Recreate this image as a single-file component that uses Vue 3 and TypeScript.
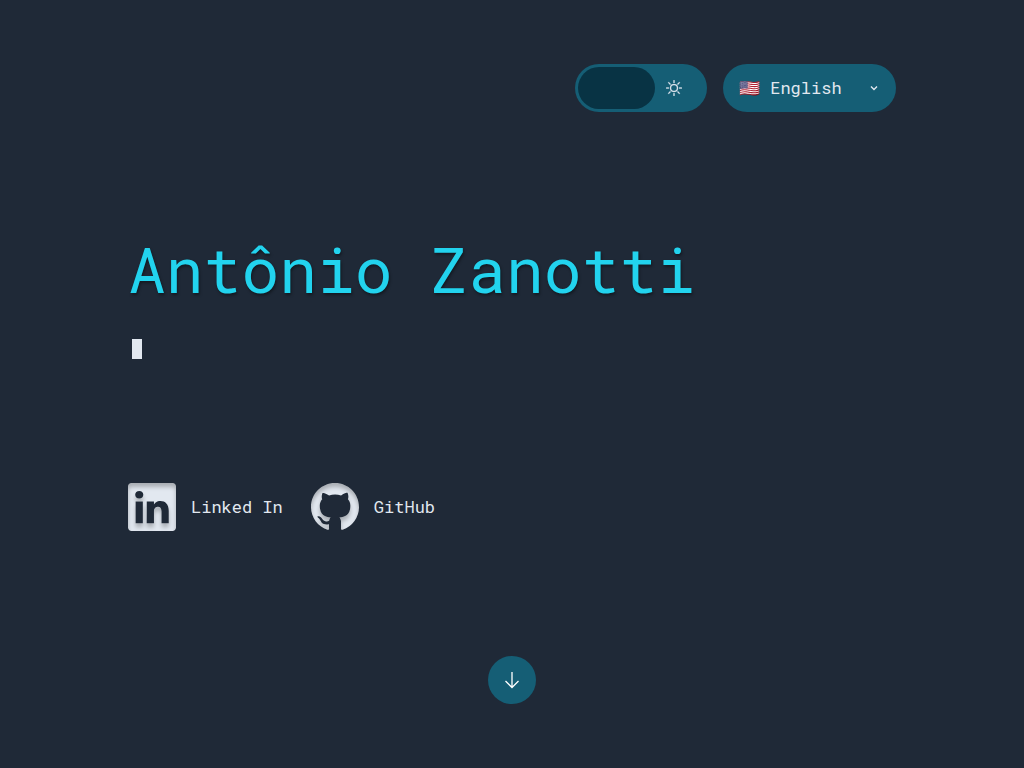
<script setup lang="ts">
import { ref } from 'vue'

interface SocialLink {
  label: string
  href: string
  path: string
}

const light = ref(false)
const language = ref('en')

const links: SocialLink[] = [
  {
    label: 'Linked In',
    href: '#linkedin',
    path: 'M0 1.146C0 .513.526 0 1.175 0h13.65C15.474 0 16 .513 16 1.146v13.708c0 .633-.526 1.146-1.175 1.146H1.175C.526 16 0 15.487 0 14.854V1.146zm4.943 12.248V6.169H2.542v7.225h2.401zm-1.2-8.212c.837 0 1.358-.554 1.358-1.248-.015-.709-.52-1.248-1.342-1.248-.822 0-1.359.54-1.359 1.248 0 .694.521 1.248 1.327 1.248h.016zm4.908 8.212V9.359c0-.216.016-.432.08-.586.173-.431.568-.878 1.232-.878.869 0 1.216.662 1.216 1.634v3.865h2.401V9.25c0-2.22-1.184-3.252-2.764-3.252-1.274 0-1.845.7-2.165 1.193v.025h-.016a5.54 5.54 0 0 1 .016-.025V6.169h-2.4c.03.678 0 7.225 0 7.225h2.4z',
  },
  {
    label: 'GitHub',
    href: '#github',
    path: 'M8 0C3.58 0 0 3.58 0 8c0 3.54 2.29 6.53 5.47 7.59.4.07.55-.17.55-.38 0-.19-.01-.82-.01-1.49-2.01.37-2.53-.49-2.69-.94-.09-.23-.48-.94-.82-1.13-.28-.15-.68-.52-.01-.53.63-.01 1.08.58 1.23.82.72 1.21 1.87.87 2.33.66.07-.52.28-.87.51-1.07-1.78-.2-3.64-.89-3.64-3.95 0-.87.31-1.59.82-2.15-.08-.2-.36-1.02.08-2.12 0 0 .67-.21 2.2.82.64-.18 1.32-.27 2-.27.68 0 1.36.09 2 .27 1.53-1.04 2.2-.82 2.2-.82.44 1.1.16 1.92.08 2.12.51.56.82 1.27.82 2.15 0 3.07-1.87 3.75-3.65 3.95.29.25.54.73.54 1.48 0 1.07-.01 1.93-.01 2.2 0 .21.15.46.55.38A8.012 8.012 0 0 0 16 8c0-4.42-3.58-8-8-8z',
  },
]
</script>

<template>
  <div class="page">
    <header class="toolbar">
      <button
        class="theme"
        :class="{ 'theme--light': light }"
        type="button"
        aria-label="Toggle theme"
        :aria-pressed="light"
        @click="light = !light"
      >
        <span class="theme__thumb"></span>
        <svg class="theme__sun" viewBox="0 0 16 16" aria-hidden="true">
          <path d="M8 11a3 3 0 1 1 0-6 3 3 0 0 1 0 6zm0 1a4 4 0 1 0 0-8 4 4 0 0 0 0 8zM8 0a.5.5 0 0 1 .5.5v2a.5.5 0 0 1-1 0v-2A.5.5 0 0 1 8 0zm0 13a.5.5 0 0 1 .5.5v2a.5.5 0 0 1-1 0v-2A.5.5 0 0 1 8 13zm8-5a.5.5 0 0 1-.5.5h-2a.5.5 0 0 1 0-1h2a.5.5 0 0 1 .5.5zM3 8a.5.5 0 0 1-.5.5h-2a.5.5 0 0 1 0-1h2A.5.5 0 0 1 3 8zm10.657-5.657a.5.5 0 0 1 0 .707l-1.414 1.415a.5.5 0 1 1-.707-.708l1.414-1.414a.5.5 0 0 1 .707 0zm-9.193 9.193a.5.5 0 0 1 0 .707L3.05 13.657a.5.5 0 0 1-.707-.707l1.414-1.414a.5.5 0 0 1 .707 0zm9.193 2.121a.5.5 0 0 1-.707 0l-1.414-1.414a.5.5 0 0 1 .707-.707l1.414 1.414a.5.5 0 0 1 0 .707zM4.464 4.465a.5.5 0 0 1-.707 0L2.343 3.05a.5.5 0 1 1 .707-.707l1.414 1.414a.5.5 0 0 1 0 .708z" />
        </svg>
      </button>
      <div class="language">
        <select v-model="language" class="language__select" aria-label="Language">
          <option value="en">🇺🇸 English</option>
          <option value="pt">🇧🇷 Português</option>
        </select>
        <svg class="language__chevron" viewBox="0 0 8 6" aria-hidden="true">
          <path d="M1 1.4L4 4.4l3-3" />
        </svg>
      </div>
    </header>

    <main class="hero">
      <h1 class="hero__name">Antônio Zanotti</h1>
      <p class="hero__typed"><span class="hero__cursor"></span></p>
    </main>

    <nav class="social" aria-label="Social profiles">
      <a v-for="link in links" :key="link.label" class="social__link" :href="link.href">
        <svg class="social__icon" viewBox="0 0 16 16" aria-hidden="true">
          <path :d="link.path" />
        </svg>
        {{ link.label }}
      </a>
    </nav>

    <footer class="more">
      <a class="more__button" href="#about" aria-label="Scroll down">
        <svg class="more__arrow" viewBox="0 0 16 18" aria-hidden="true">
          <path d="M8 1v15.5M1.5 10L8 16.5l6.5-6.5" />
        </svg>
      </a>
    </footer>

    <svg class="filters" aria-hidden="true">
      <filter id="inner-shadow" x="-0.3" y="-0.3" width="1.6" height="1.6" color-interpolation-filters="sRGB">
        <feOffset in="SourceAlpha" dy="4" result="moved" />
        <feGaussianBlur in="moved" stdDeviation="2" result="soft" />
        <feComposite in="SourceAlpha" in2="soft" operator="out" result="edge" />
        <feFlood flood-color="#000" flood-opacity="0.25" />
        <feComposite in2="edge" operator="in" result="shade" />
        <feMerge>
          <feMergeNode in="SourceGraphic" />
          <feMergeNode in="shade" />
        </feMerge>
      </filter>
    </svg>
  </div>
</template>

<style>
body {
  margin: 0;
  background: #1f2937;
}
</style>

<style scoped>
.page {
  box-sizing: border-box;
  min-height: 100vh;
  padding: 64px 12.5%;
  display: flex;
  flex-direction: column;
  justify-content: space-between;
  background: #1f2937;
  color: #e2e8f0;
  font-family: "Roboto Mono", "DejaVu Sans Mono", monospace;
  font-size: 17px;
  line-height: 24px;
}

.toolbar {
  display: flex;
  justify-content: flex-end;
  gap: 16px;
}

.theme {
  width: 132px;
  height: 48px;
  padding: 3px;
  border: 0;
  border-radius: 24px;
  background: #155e75;
  display: flex;
  align-items: center;
  gap: 11px;
  cursor: pointer;
}

.theme--light {
  flex-direction: row-reverse;
}

.theme__thumb {
  width: 77px;
  height: 42px;
  border-radius: 21px;
  background: #083344;
}

.theme__sun {
  width: 16px;
  height: 16px;
  fill: #e2e8f0;
  stroke: #e2e8f0;
  stroke-width: 0.3;
}

.language {
  position: relative;
}

.language__select {
  appearance: none;
  box-sizing: border-box;
  width: 173px;
  height: 48px;
  padding: 0 16px;
  border: 0;
  border-radius: 24px;
  background: #155e75;
  color: #e2e8f0;
  font: inherit;
  cursor: pointer;
}

.language__chevron {
  position: absolute;
  top: 21px;
  right: 18px;
  width: 8px;
  height: 6px;
  fill: none;
  stroke: #e2e8f0;
  stroke-width: 1.4;
  pointer-events: none;
}

.hero__name {
  margin: 0;
  color: #22d3ee;
  font-size: 63px;
  font-weight: 400;
  line-height: 64px;
  text-shadow: 1px 2px 3px rgba(0, 0, 0, 0.4);
}

.hero__typed {
  margin: 32px 0 0;
  padding: 6px 4px 0;
  display: flex;
}

.hero__cursor {
  width: 10px;
  height: 20px;
  background: #e2e8f0;
}

.social {
  display: flex;
  gap: 28px;
}

.social__link {
  display: flex;
  align-items: center;
  gap: 15px;
  color: inherit;
  text-decoration: none;
}

.social__icon {
  width: 48px;
  height: 48px;
  fill: #e2e8f0;
  filter: url(#inner-shadow);
}

.more {
  display: flex;
  justify-content: center;
}

.more__button {
  width: 48px;
  height: 48px;
  border-radius: 50%;
  background: #155e75;
  display: flex;
  align-items: center;
  justify-content: center;
}

.more__arrow {
  width: 16px;
  height: 18px;
  fill: none;
  stroke: #fff;
  stroke-width: 1.3;
}

.filters {
  position: absolute;
  width: 0;
  height: 0;
}
</style>
